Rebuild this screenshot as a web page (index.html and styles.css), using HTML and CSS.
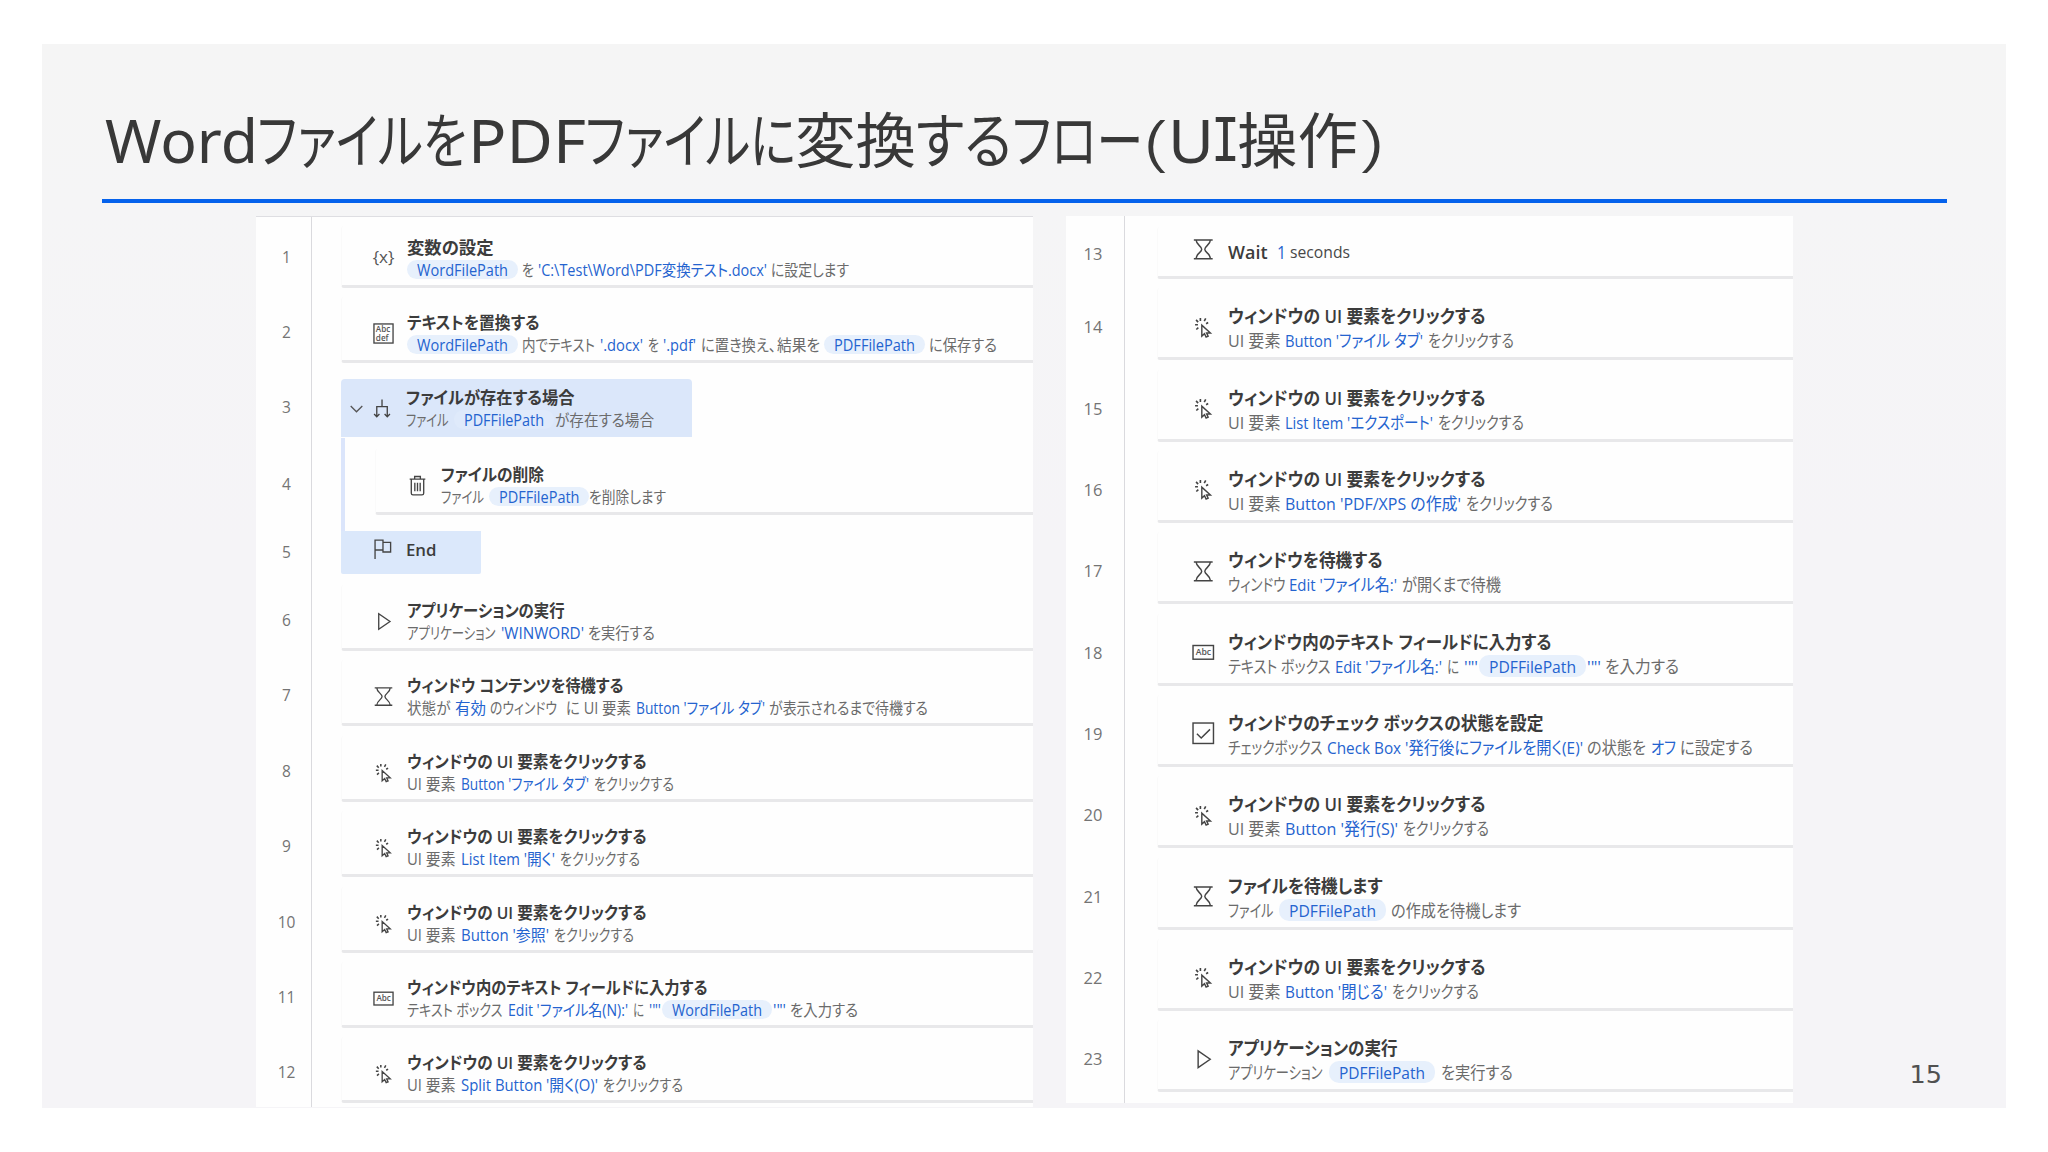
FILE: index.html
```html
<!DOCTYPE html>
<html lang="ja">
<head>
<meta charset="utf-8">
<title>WordファイルをPDFファイルに変換するフロー(UI操作)</title>
<link rel="stylesheet" href="styles.css">
</head>
<body>
<main class="slide">
  <header class="head">
    <h1 class="heading" id="heading"></h1>
  </header>
  <div class="panels">
    <section class="panel left" id="left"></section>
    <section class="panel right" id="right"></section>
  </div>
  <footer class="page">15</footer>
</main>
<script src="flow.js"></script>
</body>
</html>
```
FILE: styles.css
```css
* { box-sizing: border-box; }
body { margin: 0; background: #fff; font-family: "Open Sans", "Noto Sans CJK JP", sans-serif; }

.slide {
  position: relative;
  width: 1964px;
  height: 1064px;
  margin: 44px 0 0 42px;
  padding-left: 60px;
  background: linear-gradient(#f5f5f5 0, #f5f5f6 160px, #f5f4f7 500px);
}
.head { width: 1845px; height: 159px; padding-top: 51px; border-bottom: 4px solid #0562ec; }
.heading {
  margin: 0;
  font: 400 60px/90px "Noto Sans", "Noto Sans CJK JP", sans-serif;
  color: #383838;
}
.seriffed { font-family: "DejaVu Sans Mono", monospace; }
.thin { font-weight: 300; }

.line { display: flex; white-space: pre; font-feature-settings: "palt"; }
.run { flex: none; }
.ink { display: inline-block; transform-origin: 0 50%; white-space: pre; }

.panels { display: flex; align-items: flex-start; gap: 33px; margin-left: 154px; padding-top: 13px; }
.panel {
  overflow: hidden;
  background: linear-gradient(90deg, transparent calc(var(--gutter) - 1px), #dadade 0, #dadade var(--gutter), transparent 0), #fefefe;
}
.left { width: 777px; height: 891px; border-top: 1px solid #dedee2; }
.right { width: 727px; height: 887px; }
.left { --gutter: 56px; --indent: 29px; --icon: 21px; --lh: 22px; --pitch: 75.4px; --card: 66px; --size: 17px; --sub: 15.800px; --iconspace: 31px; --gap: 13px; }
.right { --gutter: 59px; --indent: 32px; --icon: 22.500px; --lh: 25px; --pitch: 81.34px; --card: 72px; --size: 18.300px; --sub: 17px; --iconspace: 33.500px; --gap: 13.500px; }

.row { display: flex; height: var(--pitch); }
.num {
  flex: none;
  display: flex;
  justify-content: center;
  align-items: flex-end;
  width: var(--gutter);
  padding: 0 0 21px 5px;
  font-size: 15.500px;
  line-height: 20px;
  color: #747474;
}
.right .num { padding: 0 5px 23px 0; font-size: 16.500px; }
.lane { flex: 1; display: flex; align-items: flex-end; margin-left: var(--indent); }
.card {
  flex: 1;
  display: flex;
  align-items: flex-end;
  height: var(--card);
  border-bottom: 3px solid #e8e8ea;
  border-left: 1px solid #fafafa;
  border-radius: 3px 0 0 3px;
}
.lead { flex: none; display: flex; justify-content: center; align-items: center; width: var(--iconspace); height: var(--icon); margin-bottom: 16px; }
.icon { flex: none; width: var(--icon); height: var(--icon); margin-bottom: 16px; fill: none; stroke: #444; stroke-width: 1.4; overflow: visible; }
.right .icon, .right .lead { margin-bottom: 19px; }
.icon text { font: 600 8.500px "Open Sans", sans-serif; fill: #555; stroke: none; }
.braces { font-size: 17px; line-height: 21px; width: var(--icon); margin-bottom: 18px; color: #555; display: flex; justify-content: center; }
.chev { width: 13px; height: 8px; fill: none; stroke: #555; stroke-width: 1.300; }
.copy { margin-left: var(--gap); padding-bottom: 4px; }
.name, .desc { height: var(--lh); line-height: var(--lh); }
.name { font-size: var(--size); font-weight: 600; color: #3c3c3c; }
.desc { font-size: var(--sub); color: #6b6b6b; }
.blue { color: #2463cf; }
.light { font-weight: 400; }
.dark { color: #484848; font-weight: 400; font-size: var(--sub); }
.pill { position: relative; z-index: 0; }
.pill::before {
  content: "";
  position: absolute;
  z-index: -1;
  inset: 1px -10px 2px -10px;
  border-radius: 10px;
  background: #e7f0fc;
}

.first .card { height: 62px; }
.left .first { height: 71px; }
.right .first { height: 63px; }
.right .first .card { height: 52px; }
.right .first .copy { padding-bottom: 12.500px; }
.right .first .num { padding-bottom: 15px; }
.right .first .icon, .right .first .lead { margin-bottom: 15.500px; }
.opener { height: 74.600px; }
.opener .card { flex: none; width: 351px; height: 58px; margin-bottom: 0.600px; background: #dbe7fa; border: 0; border-radius: 4px 4px 0 0; padding-bottom: 2px; }
.opener .pill::before { background: #dfeafb; }
.child { height: 92.600px; }
.child .num { padding-bottom: 37px; }
.child .lane { border-left: 4px solid #dbe5fb; padding: 0 0 16px 30px; }
.child .copy { padding-bottom: 3.500px; }
.closer { height: 43px; }
.closer .card { flex: none; width: 140px; height: 43px; background: #dbe8fb; border: 0; border-radius: 0 0 2px 2px; }
.closer .num { padding-bottom: 11.500px; }
.closer .copy { padding-bottom: 13px; }
.closer .icon, .closer .lead { margin-bottom: 14px; }
.after { height: 77.500px; }

.page {
  position: absolute;
  right: 64px;
  bottom: 19px;
  font: 25.500px/30px "DejaVu Sans", sans-serif;
  color: #505050;
}
```
FILE: flow.js
```js
// Each run is [kind, text, start, end]; start and end are x positions on the slide.
// kind: t = plain, b = value, p = variable pill, d = dark, s = serifed capital, l = thin
const CLICK = "ウィンドウの UI 要素をクリックする";
const L = 407.5, R = 1228.5;
const click = (n, end, x, v, a, b, tail) => ({
  n, icon: "click", name: [["t", CLICK, x, end]],
  desc: [["t", "UI 要素", x, x === L ? 456 : 1281], ["b", v, a, b], ["t", "をクリックする", b + 5, tail]]
});

const ICONS = {
  abcdef: '<rect x="1" y="1" width="20" height="20"/><text x="3" y="9.6">Abc</text><text x="3" y="18.4">def</text>',
  abc: '<rect x="1" y="4.4" width="20" height="13.4"/><text x="3.6" y="13.8">Abc</text>',
  branch: '<path d="M10.5 1.5V9M5 19.5V9H16V19.5M2.2 16.8L5 19.6L7.8 16.8M13.2 16.8L16 19.6L18.8 16.8"/>',
  trash: '<path d="M2.8 4.300H19.200M8 4V1.600H14V4M4.500 4.500V19a1.800 1.800 0 0 0 1.800 1.800H15.700A1.800 1.800 0 0 0 17.500 19V4.500M8.200 8V17M11 8V17M13.800 8V17"/>',
  flag: '<path d="M3.200 21V1.200H11.500V11.500H3.200M11.500 3.600H19.500V13.600H11.500V11.500"/>',
  play: '<path d="M6 2.800V19.200L17.800 11Z"/>',
  glass: '<path d="M1.800 2H20.200M1.800 20.200H20.200M4 2C4 6.500 9.500 8 9.500 11C9.500 14 4 15.500 4 20M18 2C18 6.500 12.500 8 12.500 11C12.500 14 18 15.500 18 20"/>',
  click: '<path d="M9.600 9V19.600L12.200 17.300L13.800 20.600L15.800 19.700L14.300 16.600H18Z"/><path d="M8.200 2V4.800M13.400 2.400L12 5M4 3.800L6 6M3 8.600H5.800M4.200 13.200L6.200 11.400M15.800 6.400L13.800 7.600" stroke-width="1.6"/>',
  check: '<rect x="1" y="1" width="20" height="20"/><path d="M4.800 11.500L9 15.600L17.600 7.200"/>'
};

const left = [
  { n: 1, cls: "first", icon: "{x}", name: [["t", "変数の設定", L, 494]],
    desc: [["p", "WordFilePath", 417, 508], ["t", "を", 522, 534], ["b", "'C:\\Test\\Word\\PDF変換テスト.docx'", 538, 767], ["t", "に設定します", 771, 849]] },
  { n: 2, icon: "abcdef", name: [["t", "テキストを置換する", L, 540]],
    desc: [["p", "WordFilePath", 417, 508], ["t", "内でテキスト", 522, 595], ["b", "'.docx'", 600, 643], ["t", "を", 648, 659], ["b", "'.pdf'", 663, 696], ["t", "に置き換え、", 701, 776], ["t", "結果を", 777, 820], ["p", "PDFFilePath", 834, 915], ["t", "に保存する", 929, 997]] },
  { n: 3, cls: "opener", icon: "branch", chev: true, name: [["t", "ファイルが存在する場合", L, 576]],
    desc: [["t", "ファイル", L, 450], ["p", "PDFFilePath", 465, 545], ["t", "が存在する場合", 556, 655]] },
  { n: 4, cls: "child", icon: "trash", x0: 441, name: [["t", "ファイルの削除", 441, 544]],
    desc: [["t", "ファイル", 441, 484], ["p", "PDFFilePath", 498.5, 579], ["t", "を削除します", 589, 666]] },
  { n: 5, cls: "closer", icon: "flag", name: [["t", "End", L, 438]] },
  { n: 6, cls: "after", icon: "play", name: [["t", "アプリケーションの実行", L, 565]],
    desc: [["t", "アプリケーション", L, 496], ["b", "'WINWORD'", 501, 584], ["t", "を実行する", 588, 655]] },
  { n: 7, icon: "glass", name: [["t", "ウィンドウ コンテンツを待機する", L, 624]],
    desc: [["t", "状態が", L, 451], ["b", "有効", 455, 486], ["t", "のウィンドウ", 490, 557], ["t", "に UI 要素", 566, 631], ["b", "Button 'ファイル タブ'", 636, 765], ["t", "が表示されるまで待機する", 769, 928]] },
  click(8, 647, L, "Button 'ファイル タブ'", 461, 589, 674),
  click(9, 647, L, "List Item '開く'", 461, 555, 640),
  click(10, 647, L, "Button '参照'", 461, 549, 634),
  { n: 11, icon: "abc", name: [["t", "ウィンドウ内のテキスト フィールドに入力する", L, 708]],
    desc: [["t", "テキスト ボックス", L, 503], ["b", "Edit 'ファイル名(N):'", 508, 628], ["t", "に", 633, 644], ["b", "'\"'", 649, 661], ["p", "WordFilePath", 672, 762], ["b", "'\"'", 773, 786], ["t", "を入力する", 790, 858]] },
  click(12, 647, L, "Split Button '開く(O)'", 461, 598, 683)
];

const right = [
  { n: 13, cls: "first", icon: "glass", name: [["t", "Wait", R, 1268], ["n", "1", 1278, 1287], ["d", "seconds", 1291, 1351]] },
  click(14, 1486, R, "Button 'ファイル タブ'", 1286, 1424, 1515),
  click(15, 1486, R, "List Item 'エクスポート'", 1286, 1434, 1525),
  click(16, 1486, R, "Button 'PDF/XPS の作成'", 1286, 1462, 1554),
  { n: 17, icon: "glass", name: [["t", "ウィンドウを待機する", R, 1383]],
    desc: [["t", "ウィンドウ", R, 1286], ["b", "Edit 'ファイル名:'", 1290, 1398], ["t", "が開くまで待機", 1403, 1502]] },
  { n: 18, icon: "abc", name: [["t", "ウィンドウ内のテキスト フィールドに入力する", R, 1552]],
    desc: [["t", "テキスト ボックス", R, 1331], ["b", "Edit 'ファイル名:'", 1336, 1443], ["t", "に", 1448, 1460], ["b", "'\"'", 1465, 1479], ["p", "PDFFilePath", 1490, 1577], ["b", "'\"'", 1588, 1602], ["t", "を入力する", 1606, 1680]] },
  { n: 19, icon: "check", name: [["t", "ウィンドウのチェック ボックスの状態を設定", R, 1544]],
    desc: [["t", "チェックボックス", R, 1323], ["b", "Check Box '発行後にファイルを開く(E)'", 1328, 1584], ["t", "の状態を", 1588, 1647], ["b", "オフ", 1652, 1677], ["t", "に設定する", 1681, 1754]] },
  click(20, 1486, R, "Button '発行(S)'", 1286, 1399, 1490),
  { n: 21, icon: "glass", name: [["t", "ファイルを待機します", R, 1383]],
    desc: [["t", "ファイル", R, 1274], ["p", "PDFFilePath", 1290, 1377], ["t", "の作成を待機します", 1392, 1522]] },
  click(22, 1486, R, "Button '閉じる'", 1286, 1388, 1480),
  { n: 23, icon: "play", name: [["t", "アプリケーションの実行", R, 1398]],
    desc: [["t", "アプリケーション", R, 1323], ["p", "PDFFilePath", 1340, 1426], ["t", "を実行する", 1442, 1514]] }
];

const heading = [["t", "Word", 105, 258], ["t", "ファイルを", 257, 467], ["t", "PDF", 468, 586], ["t", "ファイルに", 585, 796], ["t", "変換", 795, 916], ["t", "する", 916, 1012], ["t", "フロー", 1012, 1143], ["l", "(", 1145, 1168], ["t", "U", 1168, 1214], ["s", "I", 1211, 1240], ["t", "操作", 1237, 1358], ["l", ")", 1359, 1383]];

const KIND = { t: "", b: "blue", n: "blue light", p: "blue pill", d: "dark", s: "seriffed", l: "thin" };

function el(tag, cls, parent) {
  const e = document.createElement(tag);
  if (cls) e.className = cls;
  parent.append(e);
  return e;
}

function fill(line, runs, x0) {
  let x = x0;
  for (const [kind, text, a, b] of runs) {
    const run = el("span", "run " + KIND[kind], line);
    run.style.width = (b - a) + "px";
    run.style.marginLeft = (a - x) + "px";
    const ink = el("span", "ink", run);
    ink.textContent = text;
    ink.style.transform = "scaleX(" + (b - a) / ink.getBoundingClientRect().width + ")";
    x = b;
  }
}

function build(host, rows, x0) {
  for (const r of rows) {
    const row = el("div", "row " + (r.cls || ""), host);
    el("div", "num", row).textContent = r.n;
    const card = el("div", "card", el("div", "lane", row));
    const lead = el("div", "lead", card);
    if (r.chev) lead.innerHTML = '<svg class="chev" viewBox="0 0 13 8"><path d="M.7 1L6.500 6.800L12.300 1"/></svg>';
    if (r.icon === "{x}") {
      el("div", "braces", card).textContent = r.icon;
    } else {
      card.insertAdjacentHTML("beforeend", '<svg class="icon" viewBox="0 0 22 22">' + ICONS[r.icon] + "</svg>");
    }
    const copy = el("div", "copy", card);
    fill(el("div", "line name", copy), r.name, r.x0 || x0);
    if (r.desc) fill(el("div", "line desc", copy), r.desc, r.x0 || x0);
  }
}

const h = document.getElementById("heading");
h.classList.add("line");
fill(h, heading, 102);
build(document.getElementById("left"), left, L);
build(document.getElementById("right"), right, R);
```
